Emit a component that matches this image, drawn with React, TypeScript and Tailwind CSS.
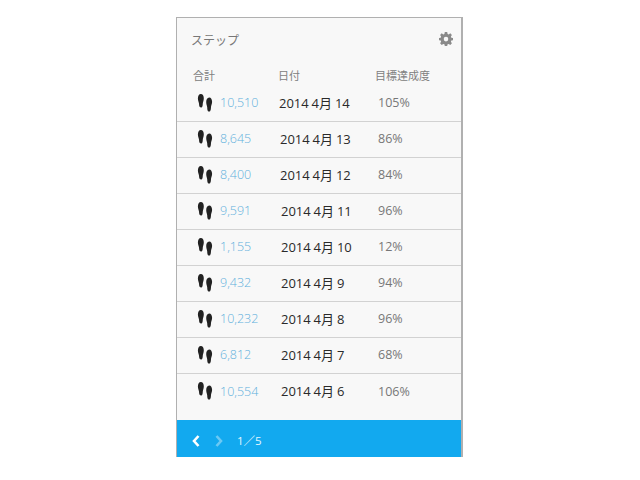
const rows = [
  { steps: "10,510", date: "2014 4月 14", pct: "105%", dateClass: "pl-[20px]" },
  { steps: "8,645", date: "2014 4月 13", pct: "86%", dateClass: "pl-[21px]" },
  { steps: "8,400", date: "2014 4月 12", pct: "84%", dateClass: "pl-[21px]" },
  { steps: "9,591", date: "2014 4月 11", pct: "96%", dateClass: "pl-[22px]" },
  { steps: "1,155", date: "2014 4月 10", pct: "12%", dateClass: "pl-[22px]" },
  { steps: "9,432", date: "2014 4月 9", pct: "94%", dateClass: "pl-[22px]" },
  { steps: "10,232", date: "2014 4月 8", pct: "96%", dateClass: "pl-[22px]" },
  { steps: "6,812", date: "2014 4月 7", pct: "68%", dateClass: "pl-[22px]" },
  { steps: "10,554", date: "2014 4月 6", pct: "106%", dateClass: "pl-[22px]" },
];

function Feet() {
  return (
    <svg width="16" height="18" viewBox="0 0 16 18" className="shrink-0 text-[#222]" fill="currentColor">
      <path d="M3.8 0C5.8 0 6.9 2 6.8 4.6C6.7 6.8 6 8 5.8 9.4C5.7 11 5.7 13.5 3.9 13.5C2.2 13.5 2.1 11.4 2 9.6C1.8 8 0.9 6.6 0.9 4.4C0.9 2 2 0 3.8 0Z" />
      <path d="M12.2 3.4C14 3.4 15.1 5.4 15.1 7.8C15.1 10 14.2 11.4 14 13C13.9 14.8 13.8 17.6 12.1 17.6C10.3 17.6 10.3 15 10.2 13.2C10 11.6 9.3 10.4 9.2 8.2C9.1 5.6 10.2 3.4 12.2 3.4Z" />
    </svg>
  );
}

function Gear() {
  return (
    <svg width="14" height="14" viewBox="0 0 14 14" className="text-[#8a8a8a]" fill="currentColor">
      <path
        fillRule="evenodd"
        d="M5.8 0H8.2L8.6 1.9L9.7 2.4L11.3 1.3L12.9 3L11.9 4.6L12.3 5.7L14 6V8.2L12.3 8.6L11.9 9.7L12.9 11.2L11.3 12.9L9.7 11.9L8.6 12.3L8.2 14H5.8L5.4 12.3L4.3 11.9L2.7 12.9L1.1 11.2L2.1 9.7L1.7 8.6L0 8.2V6L1.7 5.7L2.1 4.6L1.1 3L2.7 1.3L4.3 2.4L5.4 1.9ZM7 4.8A2.3 2.3 0 1 0 7 9.4A2.3 2.3 0 1 0 7 4.8Z"
      />
    </svg>
  );
}

export default function App() {
  return (
    <div className="min-h-[480px] bg-white pt-[17px] pl-[176px] font-['Open_Sans','Noto_Sans_CJK_JP',sans-serif]">
      <div className="flex h-[440px] w-[287px] flex-col border-t border-l border-r-2 border-[#b0b0b0] bg-[#f8f8f8]">
        <div className="flex h-[32px] items-end justify-between pr-[8px] pl-[14px]">
          <span className="text-[12px] leading-[18px] text-[#777]">ステップ</span>
          <span className="pb-[4px]">
            <Gear />
          </span>
        </div>
        <div className="flex h-[37px] items-end pb-[3px] text-[11px] leading-[16px] text-[#808080]">
          <span className="ml-[16px] w-[85px]">合計</span>
          <span className="w-[97px]">日付</span>
          <span>目標達成度</span>
        </div>
        <div className="flex-1">
          {rows.map((r, i) => (
            <div
              key={r.date}
              className={`flex h-[36px] items-center text-[13px] ${i === 0 ? "mt-[-1px]" : ""} ${i < rows.length - 1 ? "border-b border-[#d2d2d2]" : ""}`}
            >
              <span className="mb-[2px] ml-[20px] flex">
                <Feet />
              </span>
              <span className="ml-[7px] w-[39px] shrink-0 text-[12.5px] font-light text-[#5fb0dc]">{r.steps}</span>
              <span className={`${r.dateClass} w-[119px] shrink-0 text-[#2a2a2a] [word-spacing:-0.5px]`}>{r.date}</span>
              <span className="text-[12.5px] text-[#777]">{r.pct}</span>
            </div>
          ))}
        </div>
        <div className="flex h-[37px] items-center bg-[#12a9ef] pt-[5px] pl-[15px] text-[#e6f6fe]">
          <svg width="8" height="12" viewBox="0 0 8 12" fill="none" stroke="white" strokeWidth="2.6">
            <path d="M6.5 1L2 6L6.5 11" />
          </svg>
          <svg width="8" height="12" viewBox="0 0 8 12" fill="none" stroke="#6cc9f4" strokeWidth="2.6" className="ml-[15px]">
            <path d="M1.5 1L6 6L1.5 11" />
          </svg>
          <span className="ml-[14px] text-[11.5px] leading-[18px]">1／5</span>
        </div>
      </div>
    </div>
  );
}
